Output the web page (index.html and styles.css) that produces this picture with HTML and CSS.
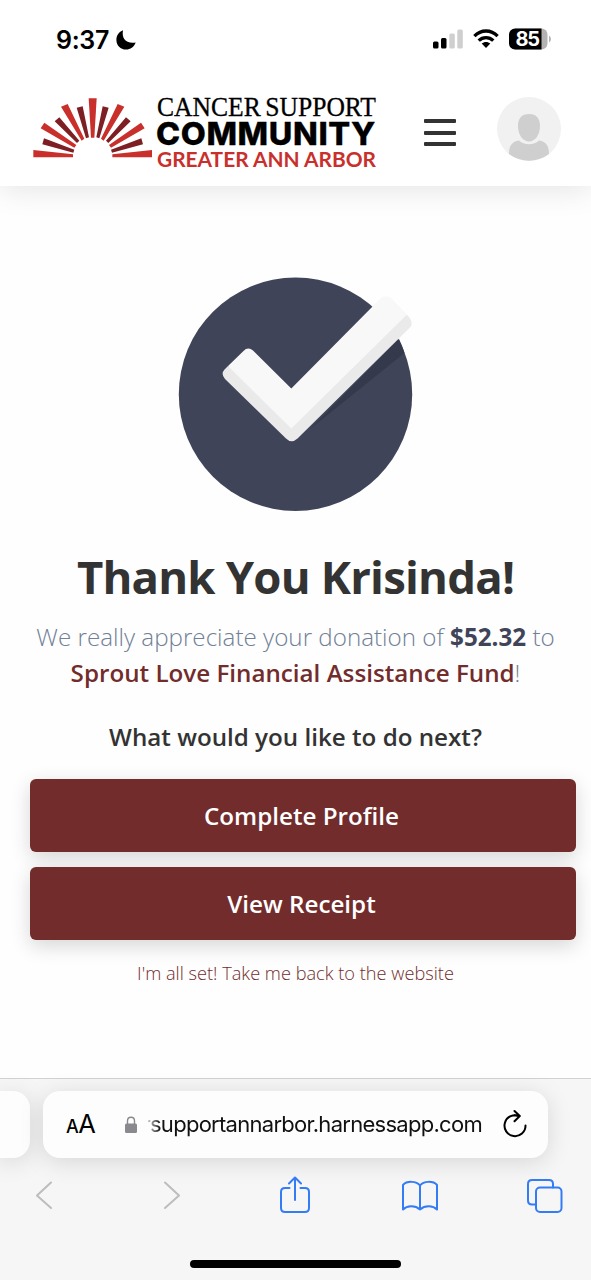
FILE: index.html
```
<!DOCTYPE html>
<html lang="en">
<head>
<meta charset="utf-8">
<title>Thank You</title>
<link rel="stylesheet" href="styles.css">
</head>
<body>
<div class="screen">
  <header class="top">
    <div class="status">
      <div class="clock"><span class="time">9:37</span>
        <svg class="moon" width="20" height="20" viewBox="0 0 20 20"><path d="M7 .3C5.4 8.500 10 14 19.700 12.500C18 17 14.400 19.600 10 19.600C4.500 19.600 .4 15.400 .4 10C.4 5.500 3 1.700 7 .3Z"/></svg>
      </div>
      <div class="indicators">
        <svg width="30" height="20" viewBox="0 0 30 20"><rect x="0" y="12.500" width="5.500" height="7" rx="1.500"/><rect x="8" y="9" width="5.500" height="10.500" rx="1.500"/><rect class="dim" x="16.300" y="4.500" width="5.500" height="15" rx="1.500"/><rect class="dim" x="24.300" y=".5" width="5.500" height="19" rx="1.500"/></svg>
        <svg class="wifi" width="26" height="20" viewBox="0 0 26 20"><g fill="none" stroke="#000" stroke-width="3.300"><path d="M1.400 7.100C8 .3 18 .3 24.600 7.100"/><path d="M5.700 11.600C9.800 7.600 16.200 7.600 20.300 11.600"/></g><path d="M8.700 14.600C11 12.400 15 12.400 17.300 14.600L13 19Z"/></svg>
        <svg class="battery" width="42" height="22" viewBox="0 0 42 22"><path class="dim dark" d="M6 .5H32.500a6 6 0 0 1 6 6V15.500a6 6 0 0 1-6 6H6Z"/><path d="M6 .5H32.500V21.500H6a6 6 0 0 1-6-6V6.500a6 6 0 0 1 6-6Z"/><path class="dim dark" d="M40 7.500Q42 9 42 11T40 14.500Z"/><text x="6.500" y="18" textLength="24.500">85</text></svg>
      </div>
    </div>
    <div class="nav">
      <svg class="logo" width="344" height="76" viewBox="33 95 344 76">
        <g transform="translate(20 85) scale(.33333)">
          <path class="red" d="M206 40H230L223 158H213Z"/>
          <g id="rays"><path class="red" d="M123 65L143 57L193 161L185 167ZM62 130L73 113L169 180L163 188ZM40 195L159 208V217H40Z"/><path class="maroon" d="M170 68L188 64L207 157L198 160ZM104 109L118 97L178 167L171 174ZM67 178L72 160L163 194L160 203Z"/></g>
          <use href="#rays" transform="translate(436) scale(-1 1)"/>
        </g>
        <text class="l1" x="157" y="116" textLength="219" lengthAdjust="spacingAndGlyphs">CANCER SUPPORT</text>
        <text class="l2" x="156" y="144.700" textLength="220" lengthAdjust="spacingAndGlyphs">COMMUNITY</text>
        <text class="l3" x="157" y="167" textLength="219" lengthAdjust="spacingAndGlyphs">GREATER ANN ARBOR</text>
      </svg>
      <div class="menu"><i></i><i></i><i></i></div>
      <svg class="avatar" width="64" height="64" viewBox="0 0 64 64"><circle cx="32" cy="32" r="32" fill="#f1f1f1"/><path fill="#cfcfcf" d="M32 17C39.500 17 43 21.500 43 29C43 38 38 44.500 32 44.500S21 38 21 29C21 21.500 24.500 17 32 17ZM12 57C12 49 14.500 44.800 22 43.500C27 48.500 37 48.500 42 43.500C49.500 44.800 52 49 52 57C40 66 24 66 12 57Z"/></svg>
    </div>
  </header>
  <main class="content">
    <svg class="check" width="236" height="236" viewBox="178 276 236 236">
      <circle cx="295.500" cy="394.200" r="116.700" fill="#3f4458"/>
      <path fill="#343a4b" d="M310 429L399 339Q402.500 346 404.500 353Z"/>
      <path fill="#eaeaea" d="M224.500 369.500Q220.500 374 225 379L286 438.500Q291.500 444 297.500 438.500L410.500 327Q413.500 322.500 409 317L406 314L291 400L228 366Z"/>
      <path fill="#f8f8f8" d="M228 366L243.500 351Q248 346.500 253 350.500L291.300 388.500L379 300Q384.500 293.500 391 298L407 314.500L291.300 428.500Z"/>
    </svg>
    <h1 class="title">Thank You Krisinda!</h1>
    <p class="message">We really appreciate your donation of <b class="amount">$52.32</b> to<br><b class="fund">Sprout Love Financial Assistance Fund</b>!</p>
    <h2 class="question">What would you like to do next?</h2>
    <div class="actions"><a class="button">Complete Profile</a><a class="button">View Receipt</a></div>
    <a class="back">I'm all set! Take me back to the website</a>
  </main>
  <footer class="browser">
    <div class="tabs">
      <div class="previous"></div>
      <div class="address">
        <span class="aa"><small>A</small>A</span>
        <svg class="lock" width="12" height="18" viewBox="0 0 12 18"><rect y="7.500" width="12" height="9.500" rx="1.500" fill="#8a8a8e"/><path d="M2.500 8V5C2.500 0 9.500 0 9.500 5V8" fill="none" stroke="#8a8a8e" stroke-width="1.400"/></svg>
        <span class="url">rsupportannarbor.harnessapp.com</span>
        <svg class="reload" width="24" height="30" viewBox="0 0 24 30" fill="none" stroke="#000" stroke-width="2" stroke-linecap="round" stroke-linejoin="round"><path d="M22.500 16.500A10.500 10.500 0 1 1 16.500 7.200L11.500 6.300M11.500 2L16.800 7L11.500 12.200"/></svg>
      </div>
    </div>
    <div class="tools">
      <svg width="18" height="40" viewBox="0 0 18 40"><path class="gray" d="M16 7.500L2 20.500L16 33"/></svg>
      <svg class="forward" width="18" height="40" viewBox="0 0 18 40"><path class="gray" d="M2 7.500L16 20.500L2 33"/></svg>
      <svg class="share" width="30" height="40" viewBox="0 0 30 40"><path class="blue" d="M9.500 13H5Q1 13 1 17V33Q1 37 5 37H25Q29 37 29 33V17Q29 13 25 13H20.500M15 25V2.500M9 8.500L15 2.500L21 8.500"/></svg>
      <svg class="book" width="38" height="40" viewBox="0 0 38 40"><path class="blue" d="M19 10.500C15.500 6 6 5.500 2 10V34.500C6 30.500 14 30 19 34.500C24 30 32 30.500 36 34.500V10C32 5.500 22.500 6 19 10.500V34.500"/></svg>
      <svg class="windows" width="36" height="40" viewBox="0 0 36 40"><path class="blue" d="M9 29.500H5Q1 29.500 1 25.500V9Q1 5 5 5H22Q26 5 26 9V12.500"/><rect class="blue" x="9" y="12.500" width="25.500" height="24.500" rx="4"/></svg>
    </div>
    <div class="home"></div>
  </footer>
</div>
</body>
</html>
```
FILE: styles.css
```
* { box-sizing: border-box; }
body { margin: 0; background: #fefefe; font-family: "Open Sans", sans-serif; }
.screen { width: 591px; height: 1280px; display: flex; flex-direction: column; overflow: hidden; }
.top { height: 186px; flex: none; background: #fff; box-shadow: 0 4px 28px rgba(0,0,0,.1); }
.status { height: 78px; display: flex; justify-content: space-between; padding: 26px 40px 0 56px; font-family: Inter, sans-serif; }
.clock { display: flex; height: 28px; align-items: center; gap: 7px; }
.time { font-size: 25px; font-weight: 600; letter-spacing: -.3px; line-height: 28px; }
.indicators { display: flex; height: 26px; align-items: center; gap: 10px; }
.battery text { fill: #fff; font: 700 20px Inter, sans-serif; }
.dim { fill: #cfcfcf; }
.dim.dark { fill: #b3b3b3; }
.nav { height: 108px; display: flex; align-items: flex-start; padding: 17px 30px 0 33px; }
.logo { flex: none; overflow: visible; }
.red { fill: #c9302c; }
.maroon { fill: #7e2023; }
.l1 { font: 27px "Liberation Serif", serif; stroke: #000; stroke-width: .3px; word-spacing: -2px; }
.l2 { font: 800 31.500px Inter, sans-serif; stroke: #000; stroke-width: .3px; letter-spacing: .6px; }
.l3 { font: 700 20.500px Lato, sans-serif; fill: #c9302c; }
.menu { width: 32px; margin: 24px 0 0 47px; display: flex; flex-direction: column; gap: 7.500px; }
.menu i { height: 4px; background: #333; border-radius: 1px; }
.avatar { margin: 2px 0 0 41px; flex: none; }
.content { height: 892px; flex: none; display: flex; flex-direction: column; align-items: center; padding-top: 90px; text-align: center; }
.check { flex: none; margin-left: 1px; }
.title { margin: 32px 0 0; font-size: 45.500px; line-height: 64px; font-weight: 700; letter-spacing: -.8px; color: #333; white-space: nowrap; }
.message { margin: 11px 0 0; font-size: 24.200px; line-height: 36.200px; font-weight: 300; color: #718096; white-space: nowrap; }
.amount { font-weight: 700; color: #3f4458; }
.fund { font-weight: 600; color: #722c2c; }
.question { margin: 28px 0 0; font-size: 24.200px; line-height: 36px; font-weight: 600; color: #333; white-space: nowrap; }
.actions { align-self: stretch; display: flex; flex-direction: column; gap: 15px; margin: 24px 15px 0 30px; }
.button { height: 73px; border-radius: 6px; background: #722c2c; color: #fff; font-size: 24.200px; font-weight: 600; line-height: 74px; padding-right: 3px; box-shadow: 0 6px 20px rgba(0,0,0,.16); }
.back { margin-top: 19px; font-size: 18.200px; line-height: 28px; font-weight: 300; color: #722c2c; }
.browser { height: 202px; flex: none; background: #f6f6f6; border-top: 1px solid #d2d2d2; font-family: Inter, sans-serif; }
.tabs { height: 90px; display: flex; gap: 13px; padding-top: 12px; }
.previous, .address { height: 67px; background: #fdfdfd; box-shadow: 0 4px 24px rgba(0,0,0,.13); }
.previous { width: 30px; border-radius: 0 17px 17px 0; }
.address { width: 505px; border-radius: 17px; display: flex; align-items: center; padding-left: 23px; }
.aa { width: 31px; font-size: 25.500px; line-height: 30px; white-space: nowrap; letter-spacing: -.5px; padding-top: 2px; }
.aa small { font-size: 18px; font-weight: 500; }
.lock { margin-left: 28px; }
.url { width: 334px; margin-left: 11px; margin-top: -2px; font-size: 22px; letter-spacing: -.72px; white-space: nowrap; display: flex; justify-content: flex-end; overflow: hidden; color: #111; -webkit-mask-image: linear-gradient(90deg, rgba(0,0,0,.2), #000 12px); mask-image: linear-gradient(90deg, rgba(0,0,0,.2), #000 12px); }
.reload { margin: -2px 0 0 21px; }
.tools { height: 52px; display: flex; align-items: center; padding-left: 35px; }
.forward { margin-left: 110px; }
.share { margin-left: 99px; }
.book { margin-left: 90.500px; }
.windows { margin-left: 88px; }
.tools path, .tools rect { fill: none; stroke-width: 2; stroke-linecap: round; stroke-linejoin: round; }
.tools .gray { stroke: #bdbdbf; }
.tools .blue { stroke: #347cf6; }
.home { width: 211px; height: 8px; border-radius: 4px; background: #000; margin: 39px 0 0 190px; }
```
